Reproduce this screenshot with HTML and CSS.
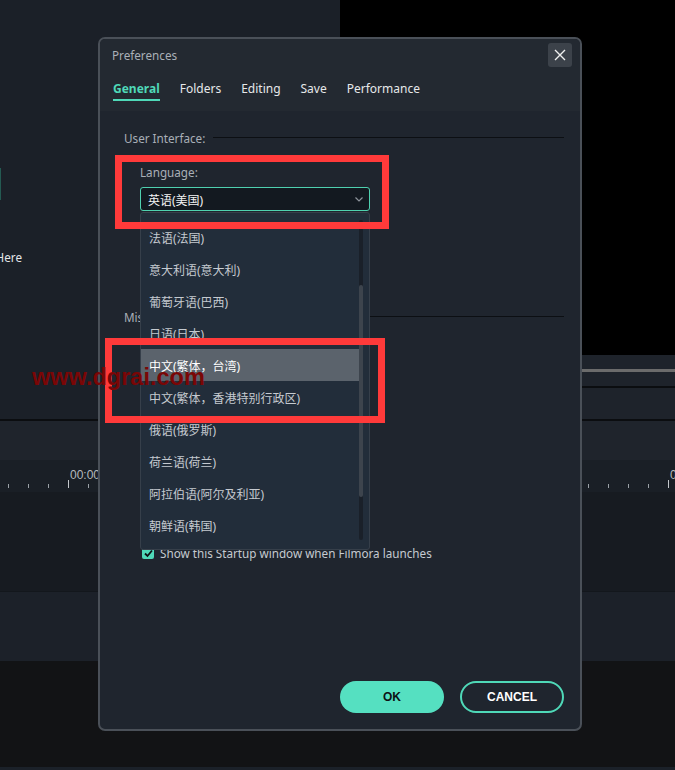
FILE: index.html
```html
<!DOCTYPE html>
<html lang="zh-CN">
<head>
    <meta charset="UTF-8">
    <title>Preferences</title>
    <link rel="stylesheet" href="styles.css">
</head>
<body>

    <!-- editor behind the modal -->
    <div class="app">
        <div class="workspace">
            <div class="media">
                <div class="media-accent"></div>
                <div class="drop-hint"><span>Import Media Files Here</span></div>
            </div>
            <div class="viewer">
                <div class="screen"></div>
                <div class="scrubber"></div>
                <div class="controls"></div>
                <div class="viewer-bar"></div>
            </div>
        </div>
        <div class="toolbar"></div>
        <div class="ruler">
            <div class="ruler-labels">
                <span>00:00:00:00</span><span>00:00:02:00</span>
                <span>00:00:04:00</span><span>00:00:06:00</span>
            </div>
            <div class="ticks"></div>
        </div>
        <div class="track"></div>
        <div class="track audio"></div>
        <div class="footer"></div>
        <div class="statusbar"></div>
    </div>

    <div class="dialog">
        <div class="dialog-head">
            <div class="title-row">
                <span class="title">Preferences</span>
                <button class="close">
                    <svg width="12" height="12" viewBox="0 0 12 12"><path d="M1 1 L11 11 M11 1 L1 11" stroke="#f0f0f0" stroke-width="1.4" fill="none"/></svg>
                </button>
            </div>
            <div class="tabs">
                <span class="tab active">General</span>
                <span class="tab">Folders</span>
                <span class="tab">Editing</span>
                <span class="tab">Save</span>
                <span class="tab">Performance</span>
            </div>
        </div>

        <div class="dialog-body">
            <div class="group-title"><span>User Interface:</span><i class="rule"></i></div>

            <div class="field">
                <label>Language:</label>
                <div class="select-wrap">
                    <div class="select">
                        <span>英语(美国)</span>
                        <svg width="8" height="5" viewBox="0 0 8 5"><path d="M0.5 0.5 L4 4 L7.5 0.5" stroke="#8c929a" stroke-width="1.2" fill="none"/></svg>
                    </div>
                    <div class="dropdown">
                        <ul class="options">
                            <li>法语(法国)</li>
                            <li>意大利语(意大利)</li>
                            <li>葡萄牙语(巴西)</li>
                            <li>日语(日本)</li>
                            <li class="selected">中文(繁体，台湾)</li>
                            <li>中文(繁体，香港特别行政区)</li>
                            <li>俄语(俄罗斯)</li>
                            <li>荷兰语(荷兰)</li>
                            <li>阿拉伯语(阿尔及利亚)</li>
                            <li>朝鲜语(韩国)</li>
                        </ul>
                        <div class="scroll"><div class="thumb"></div></div>
                    </div>
                </div>
            </div>

            <div class="group-title misc"><span>Miscellaneous:</span><i class="rule"></i></div>

            <div class="check-row">
                <span class="checkbox">
                    <svg width="11" height="11" viewBox="0 0 11 11"><path d="M2 5.5 L4.5 8 L9 2.5" stroke="#0d1114" stroke-width="1.8" fill="none"/></svg>
                </span>
                <span>Show this Startup window when Filmora launches</span>
            </div>

            <div class="actions">
                <button class="btn ok">OK</button>
                <button class="btn cancel">CANCEL</button>
            </div>
        </div>
    </div>

    <!-- screenshot annotations -->
    <div class="mark mark-lang"></div>
    <div class="mark mark-item"></div>
    <div class="watermark">www.dgrai.com</div>

</body>
</html>
```

FILE: styles.css
```css
* {
    box-sizing: border-box;
}

html, body {
    margin: 0;
    height: 100%;
}

body {
    position: relative;
    overflow: hidden;
    background: #121315;
    font-family: "Noto Sans", "Noto Sans CJK SC", sans-serif;
    font-size: 11.7px;
    color: #c6cbd0;
}

/* editor background */
.app {
    display: flex;
    flex-direction: column;
    height: 770px;
}

.workspace {
    display: flex;
    height: 421px;
    border-bottom: 2px solid #0b0d10;
}

.media {
    width: 340px;
    background: #1b2028;
    display: flex;
    flex-direction: column;
}

.media-accent {
    width: 1px;
    height: 32px;
    margin-top: 168px;
    background: #245a52;
}

.drop-hint {
    width: 22px;
    margin-top: 50px;
    display: flex;
    justify-content: flex-end;
    white-space: nowrap;
    color: #e4e6e8;
    line-height: 14px;
}

.viewer {
    flex: 1;
    display: flex;
    flex-direction: column;
    background: #1e232b;
}

.screen {
    height: 355px;
    background: #000;
}

.scrubber {
    height: 3px;
    margin-top: 14px;
    background: #6b6b6b;
}

.controls {
    height: 16px;
    border-bottom: 2px solid #0b0d10;
}

.viewer-bar {
    flex: 1;
}

.toolbar {
    height: 39px;
    background: #1f242c;
}

.ruler {
    height: 32px;
    background: #1a1f26;
    padding-top: 9px;
}

.ruler-labels {
    display: flex;
    padding-left: 70px;
    height: 11px;
    line-height: 12px;
    font-family: "Liberation Sans", sans-serif;
    font-size: 12px;
    color: #b4b9be;
}

.ruler-labels span {
    flex: 0 0 200px;
}

.ticks {
    height: 8px;
    background:
        repeating-linear-gradient(90deg, transparent 0 68px, #c4c8cc 68px 69px, transparent 69px 100px) top left / 100% 8px no-repeat,
        repeating-linear-gradient(90deg, transparent 0 8px, #9aa0a6 8px 9px, transparent 9px 20px) bottom left / 100% 4px no-repeat;
}

.track {
    height: 99px;
    background: #171b21;
}

.track.audio {
    height: 70px;
    background: #1c2129;
    border-top: 1px solid #13171c;
}

.footer {
    height: 106px;
    background: #121315;
}

.statusbar {
    flex: 1;
    background: #1b2129;
}

/* preferences modal */
.dialog {
    position: absolute;
    left: 98px;
    top: 37px;
    width: 484px;
    height: 694px;
    border: 2px solid #4a5058;
    border-radius: 7px;
    background: #1f252e;
    display: flex;
    flex-direction: column;
    overflow: hidden;
    z-index: 1;
}

.dialog-head {
    height: 72px;
    background: #232931;
}

.title-row {
    height: 32px;
    display: flex;
    align-items: center;
    justify-content: space-between;
    padding: 0 8px 0 12px;
}

.title {
    color: #aab0b8;
}

.close {
    width: 24px;
    height: 24px;
    border: none;
    border-radius: 3px;
    background: #3c424a;
    padding: 0;
    display: flex;
    align-items: center;
    justify-content: center;
}

.tabs {
    display: flex;
    gap: 20px;
    padding: 8px 0 0 13px;
    font-size: 12px;
}

.tab {
    line-height: 19px;
    padding-bottom: 1px;
    color: #e6e8ea;
}

.tab.active {
    color: #4fd9b8;
    font-weight: bold;
    border-bottom: 2px solid #4fd9b8;
}

.dialog-body {
    flex: 1;
    display: flex;
    flex-direction: column;
    padding: 19px 16px 16px 24px;
}

.group-title {
    display: flex;
    align-items: center;
    line-height: 16px;
    color: #a9afb7;
}

.group-title .rule {
    flex: 1;
    height: 1px;
    margin: -2px 0 0 8px;
    background: #0c0f13;
}

.group-title.misc {
    margin-top: 98px;
}

.field {
    padding-left: 16px;
    margin-top: 18px;
}

.field label {
    display: block;
    line-height: 16px;
    color: #a9afb7;
}

.select-wrap {
    position: relative;
    width: 230px;
    margin-top: 7px;
}

.select {
    height: 24px;
    border: 1px solid #4fd1b0;
    border-radius: 3px;
    background: #131920;
    display: flex;
    align-items: center;
    justify-content: space-between;
    padding: 1px 6px 0 7px;
    font-size: 12px;
    color: #f2f2f2;
}

.dropdown {
    position: absolute;
    top: 25px;
    left: 0;
    width: 230px;
    height: 338px;
    background: #222d3a;
    border: 1px solid #363f4a;
    border-radius: 3px;
    display: flex;
    overflow: hidden;
    z-index: 2;
}

.options {
    flex: 1;
    list-style: none;
    margin: 0;
    padding: 8px 0;
    font-size: 12px;
}

.options li {
    height: 32px;
    line-height: 29px;
    padding: 3px 0 0 8px;
    color: #c5cad0;
    white-space: nowrap;
}

.options li.selected {
    background: #5b636c;
    color: #fff;
}

.scroll {
    width: 4px;
    margin: 7px 6px 9px 0;
    background: #1a2029;
    border-radius: 2px;
}

.thumb {
    margin-top: 65px;
    height: 212px;
    background: #3d444d;
    border-radius: 2px;
}

.check-row {
    display: flex;
    align-items: center;
    gap: 6px;
    padding-left: 18px;
    margin-top: 220px;
    line-height: 16px;
    color: #c5cad0;
}

.checkbox {
    width: 12px;
    height: 12px;
    border-radius: 2px;
    background: #4fd9b8;
    display: flex;
    align-items: center;
    justify-content: center;
}

.actions {
    margin-top: auto;
    display: flex;
    justify-content: flex-end;
    gap: 16px;
}

.btn {
    width: 104px;
    height: 32px;
    border-radius: 16px;
    font-family: "Liberation Sans", sans-serif;
    font-size: 12px;
    font-weight: bold;
}

.btn.ok {
    border: none;
    background: #55e0c1;
    color: #0d1114;
}

.btn.cancel {
    border: 2px solid #4fd9b8;
    background: transparent;
    color: #fff;
}

/* red annotation boxes and watermark */
.mark {
    position: absolute;
    border: 7px solid #ff3a3a;
    z-index: 3;
}

.mark-lang {
    left: 115px;
    top: 155px;
    width: 274px;
    height: 74px;
}

.mark-item {
    left: 105px;
    top: 338px;
    width: 280px;
    height: 85px;
}

.watermark {
    position: absolute;
    left: 32px;
    top: 364px;
    z-index: 4;
    font-family: "Liberation Sans", sans-serif;
    font-size: 23.5px;
    font-weight: bold;
    color: #7a0606;
}
```
